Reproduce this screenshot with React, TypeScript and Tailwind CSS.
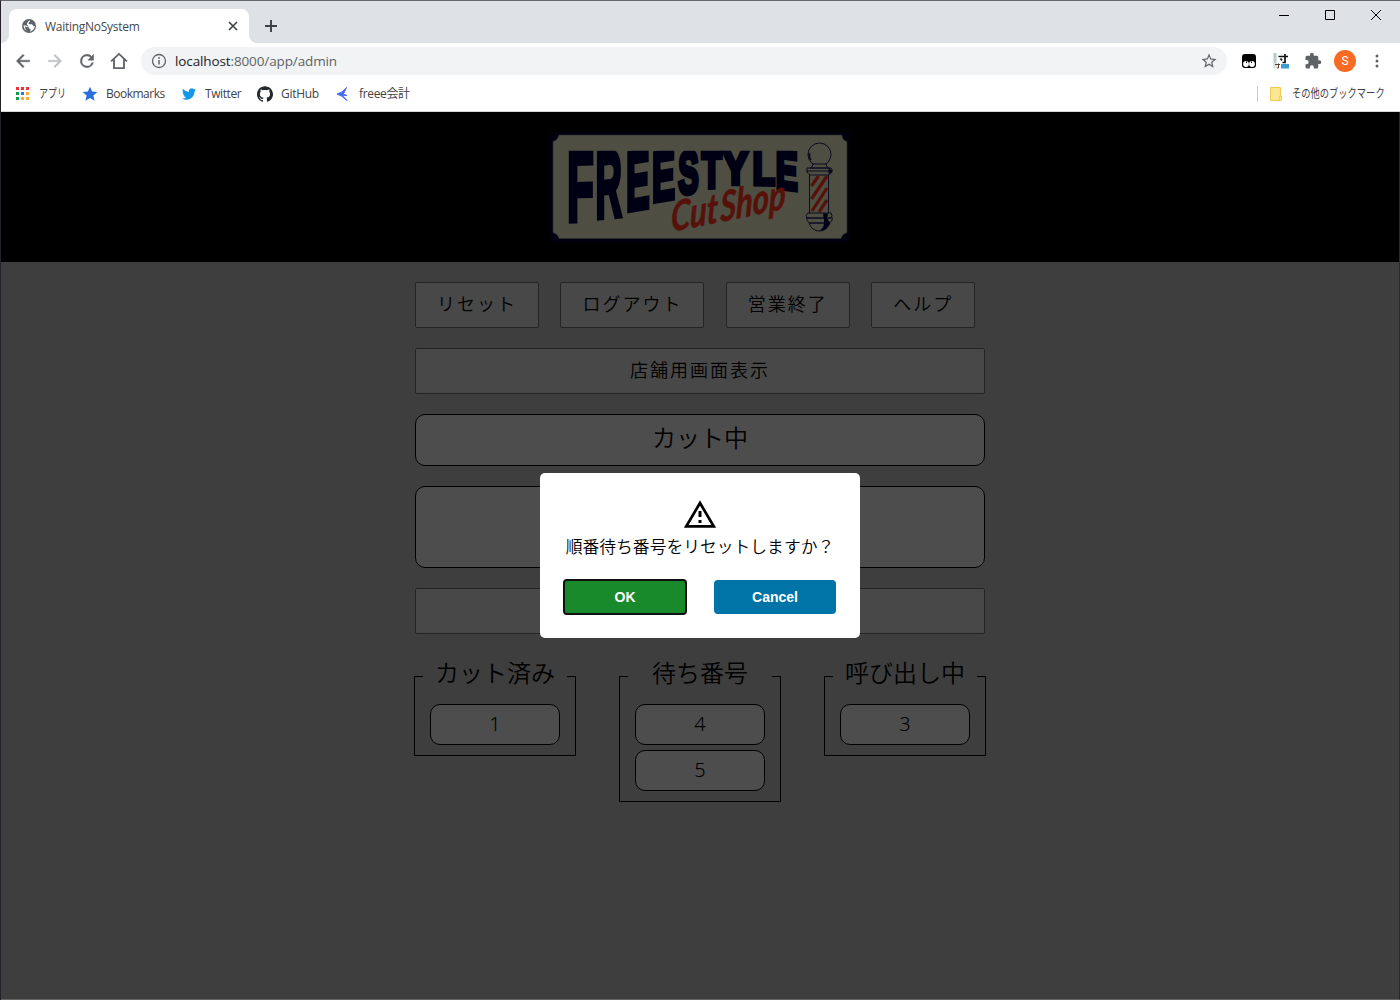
import type { ReactNode } from "react";

const JP = "font-['Noto_Sans_CJK_JP',sans-serif]";

const LETTERS: { c: string; x: number; w: number; bottomL: number; bottomR: number }[] = [
  { c: "F", x: 28, w: 26.5, bottomL: 103.5, bottomR: 102 },
  { c: "R", x: 56, w: 27.5, bottomL: 101.5, bottomR: 96.5 },
  { c: "E", x: 86.5, w: 24, bottomL: 95, bottomR: 87 },
  { c: "E", x: 112.5, w: 23.5, bottomL: 86, bottomR: 78 },
  { c: "S", x: 137.5, w: 22, bottomL: 77, bottomR: 73 },
  { c: "T", x: 160.5, w: 22.5, bottomL: 70, bottomR: 69 },
  { c: "Y", x: 181.5, w: 28, bottomL: 66, bottomR: 66 },
  { c: "L", x: 213, w: 22.5, bottomL: 66, bottomR: 67 },
  { c: "E", x: 236, w: 22.5, bottomL: 68, bottomR: 74 },
];

/* Glyph ink metrics of Liberation Sans Bold at 100px: left bearing and ink width. */
const INK: Record<string, [number, number]> = {
  F: [6.9, 51.2],
  R: [6.9, 64.2],
  E: [6.9, 56.3],
  S: [3.9, 58.7],
  T: [2.1, 56.9],
  Y: [1.5, 63.7],
  L: [6.9, 50.3],
};

function Logo() {
  return (
    <svg viewBox="0 0 320 130" className="h-[130px] w-[320px]">
      <clipPath id="wordmark">
        <rect x="0" y="30.700" width="320" height="90" />
      </clipPath>
      <rect x="10" y="12.500" width="300" height="109.500" fill="#00000f" />
      <path
        d="M19 15H302Q302 20 307 21.500V112.500Q302 114 301 118.500H19Q18 114 13 112.500V21.500Q18 20 19 15Z"
        fill="#4e4e43"
        stroke="#2e2e34"
        strokeWidth="0.6"
      />
      <g clipPath="url(#wordmark)">
        {LETTERS.map((l, i) => {
          const [lb, iw] = INK[l.c];
          const sx = (l.w - 4) / iw;
          const mid = (l.bottomL + l.bottomR) / 2;
          const half = (l.bottomR - l.bottomL) / 2;
          const skew = half / l.w;
          const sy = (mid - 2 - 32) / 68.8;
          const x0 = l.x + 2 - lb * sx;
          return (
            <text
              key={i}
              fontFamily="Liberation Sans"
              fontWeight="bold"
              fontSize="100"
              fill="#000014"
              stroke="#000014"
              strokeWidth="4"
              vectorEffect="non-scaling-stroke"
              transform={`matrix(${sx} ${skew * sx} 0 ${sy} ${x0} ${mid - 2 - half / 2})`}
            >
              {l.c}
            </text>
          );
        })}
      </g>
      <text
        fontFamily="Lato"
        fontStyle="italic"
        fontWeight="bold"
        fontSize="41"
        fill="#56120a"
        stroke="#56120a"
        strokeWidth="0.6"
        strokeLinejoin="round"
        wordSpacing="-6"
        textLength="117"
        lengthAdjust="spacingAndGlyphs"
        transform="translate(131 112) rotate(-11.500) skewX(-12)"
      >
        Cut Shop
      </text>
      <g stroke="#0c0c20" strokeWidth="1" fill="none">
        <circle cx="279.500" cy="34.500" r="11.500" />
        <path d="M269.500 33q-1 4 1.500 7" strokeWidth="1.800" />
        <path d="M273 44h13q0 3 3 4h-19q3-1 3-4zM267 48h24q2 2 1 4-1 2-4 3h-17q-3-1-4-3zM266.500 51h25M269.500 55v38M288.500 55v38" fill="#4e4e43" />
        <path d="M289 48.500l3 2.500-3 2.500z" fill="#000014" />
        <path d="M271.500 66l7-10M271.500 79l15.500-23M272 91l15-23M279 92l8-12" stroke="#56120a" strokeWidth="3.200" />
        <path d="M268 93h23q2 3 0 5h-24q-2-3 1-5zM266.500 98h26q0 3-3 5h-20q-3-2-3-5zM269 103q3 8 10.500 8t10.500-8z" fill="#4e4e43" />
        <path d="M283 93.500h5l-1 5 3 4q-3 8-10 8 5-4 4-10z" fill="#000014" stroke="none" />
      </g>
    </svg>
  );
}

function ShopButton({ children, className }: { children?: ReactNode; className: string }) {
  return (
    <button
      className={`flex h-[46px] shrink-0 items-center justify-center rounded-[2px] border border-[#242424] bg-[#484848] pb-[3px] text-[18px] font-[350] tracking-[2px] whitespace-nowrap text-black ${className}`}
    >
      {children}
    </button>
  );
}

function Group({ title, items }: { title: string; items: number[] }) {
  return (
    <section className="w-[162px]">
      <div className="flex h-[30px] items-center">
        <span className="h-[14px] w-[9px] shrink-0 self-end border-t border-l border-black" />
        <h2 className="flex-1 pb-[6px] text-center text-[24px] leading-[24px] font-[350] whitespace-nowrap">{title}</h2>
        <span className="h-[14px] w-[9px] shrink-0 self-end border-t border-r border-black" />
      </div>
      <div className="flex flex-col gap-[5px] border-x border-b border-black px-[15px] pt-[14px] pb-[10px]">
        {items.map((n) => (
          <div
            key={n}
            className="flex h-[41px] items-center justify-center rounded-[10px] border border-black bg-[#4d4d4d] pb-[2px] font-['Noto_Sans',sans-serif] text-[20px] font-light"
          >
            {n}
          </div>
        ))}
      </div>
    </section>
  );
}

function TabStrip() {
  return (
    <div className="flex h-[42px] items-end bg-[#dee1e6]">
      <div className="flex h-[34px] w-2 items-end bg-white">
        <div className="h-full w-full rounded-br-[8px] bg-[#dee1e6]" />
      </div>
      <div className="flex h-[34px] w-[240px] items-center rounded-t-[8px] bg-white pl-[13px]">
        <svg viewBox="0 0 16 16" className="size-[14px]">
          <circle cx="8" cy="8" r="8" fill="#5f6368" />
          <path d="M9 1.500Q9.500 3.500 7.500 4.200 7 6 9 6h2.500l1.500 2h1.600Q14.500 13 9 14.500 10.500 12.500 9.500 11.500 7.500 11 7.500 9L4.500 7.500H1.500Q2 11.500 5.500 13.800 2.500 9 3.500 8.500L6 9.500 7 8 5.500 6 6.500 3.500z" fill="white" />
        </svg>
        <span className="mt-[2px] ml-[9px] text-[12px] tracking-[-0.270px] text-[#45484d]">WaitingNoSystem</span>
        <svg viewBox="0 0 10 10" className="mr-[11px] ml-auto size-[10px]">
          <path d="M1 1l8 8M9 1l-8 8" stroke="#3c4043" strokeWidth="1.600" />
        </svg>
      </div>
      <div className="flex h-[34px] w-2 items-end bg-white">
        <div className="h-full w-full rounded-bl-[8px] bg-[#dee1e6]" />
      </div>
      <svg viewBox="0 0 12 12" className="mb-[11px] ml-[8px] size-[12px]">
        <path d="M6 0v12M0 6h12" stroke="#3c4043" strokeWidth="1.900" />
      </svg>
      <div className="mb-[22px] ml-auto flex items-center pr-[18px]">
        <svg viewBox="0 0 12 12" className="size-[12px]">
          <path d="M1 6.500h10" stroke="black" />
        </svg>
        <svg viewBox="0 0 12 12" className="ml-[34px] size-[12px]">
          <path d="M1.500 1.500h9v9h-9z" stroke="black" fill="none" />
        </svg>
        <svg viewBox="0 0 12 12" className="ml-[34px] size-[12px]">
          <path d="M1 1l10 10M11 1L1 11" stroke="black" />
        </svg>
      </div>
    </div>
  );
}

function Toolbar() {
  return (
    <div className="flex h-[36px] items-center">
      <svg viewBox="0 0 24 24" className="ml-[12px] size-5" fill="#5f6368" stroke="#5f6368" strokeWidth="0.500">
        <path d="M20 11H7.830l5.590-5.590L12 4l-8 8 8 8 1.410-1.410L7.830 13H20z" />
      </svg>
      <svg viewBox="0 0 24 24" className="ml-[12px] size-5" fill="#bdc1c6" stroke="#bdc1c6" strokeWidth="0.500">
        <path d="M12 4l-1.410 1.410L16.170 11H4v2h12.170l-5.580 5.590L12 20l8-8z" />
      </svg>
      <svg viewBox="0 0 24 24" className="ml-[12px] size-5" fill="#5f6368" stroke="#5f6368" strokeWidth="0.500">
        <path d="M17.650 6.350A7.958 7.958 0 0 0 12 4a8 8 0 1 0 7.730 10h-2.080A6 6 0 1 1 12 6c1.660 0 3.140.69 4.220 1.780L13 11h7V4z" />
      </svg>
      <svg viewBox="0 0 24 24" className="ml-[12px] size-5" fill="none" stroke="#5f6368" strokeWidth="2.200">
        <path d="M2.500 12.500L12 3.500l9.500 9M6 10v10.500h12V10" />
      </svg>
      <div className="ml-[12px] flex h-[28px] w-[1086px] items-center rounded-full bg-[#f1f3f4]">
        <svg viewBox="0 0 16 16" className="ml-[10px] size-4" fill="none" stroke="#5f6368">
          <circle cx="8" cy="8" r="6.500" strokeWidth="1.300" />
          <path d="M8 4v1.700M8 7v4.500" strokeWidth="1.500" />
        </svg>
        <span className="ml-[8px] text-[13.500px] tracking-[-0.120px] text-[#5f6368]">
          <span className="text-[#202124]">localhost</span>:8000/app/admin
        </span>
        <svg viewBox="0 0 24 24" className="mr-[9px] ml-auto size-[18px]" fill="#5f6368">
          <path d="M22 9.240l-7.190-.62L12 2 9.190 8.630 2 9.240l5.460 4.730L5.820 21 12 17.270 18.180 21l-1.630-7.030zM12 15.400l-3.760 2.270 1-4.280-3.320-2.880 4.380-.38L12 6.100l1.710 4.040 4.380.38-3.320 2.880 1 4.280z" />
        </svg>
      </div>
      <svg viewBox="0 0 14 14" className="ml-[15px] size-[14px]">
        <rect width="14" height="14" rx="3" fill="black" />
        <circle cx="4" cy="10" r="2.900" fill="white" />
        <circle cx="10" cy="10" r="2.900" fill="white" />
        <path d="M4 7.500h1v1.500h-1zM9 7.500h1v1.500h-1z" fill="black" />
      </svg>
      <svg viewBox="0 0 16 16" className="ml-[17px] size-4" fill="none">
        <path d="M0 0h4v15H0z" fill="#d9e2e4" />
        <path d="M2 0v10" stroke="#9fb0b6" />
        <path d="M5.500 3.500h9.500M12 1v8.500h-2.500M7.500 5.500l1.500 2" stroke="#111" strokeWidth="1.700" />
        <path d="M8 11h8v4.500H8z" fill="#3f9bd6" />
        <path d="M2 11.500h5M5.500 10.500v4.500h-1.500" stroke="#5a4028" />
      </svg>
      <svg viewBox="0 0 24 24" className="ml-[15px] size-[18px]" fill="#5f6368">
        <path d="M20.500 11H19V7a2 2 0 0 0-2-2h-4V3.500a2.500 2.500 0 0 0-5 0V5H4a2 2 0 0 0-2 2v3.800h1.500a2.700 2.700 0 0 1 0 5.400H2V20a2 2 0 0 0 2 2h3.800v-1.500a2.700 2.700 0 0 1 5.400 0V22H17a2 2 0 0 0 2-2v-4h1.500a2.500 2.500 0 0 0 0-5z" />
      </svg>
      <div className="ml-[12px] flex size-[22px] items-center justify-center rounded-full bg-[#fb6a22] font-['Roboto',sans-serif] text-[12px] text-white">
        S
      </div>
      <svg viewBox="0 0 4 14" className="ml-[19px] h-[14px] w-[4px]" fill="#5f6368">
        <circle cx="2" cy="2" r="1.500" />
        <circle cx="2" cy="7" r="1.500" />
        <circle cx="2" cy="12" r="1.500" />
      </svg>
    </div>
  );
}

const APP_DOTS = ["#f2303c", "#f2303c", "#f2303c", "#0f9d58", "#2979e8", "#f9ab2b", "#0f9d58", "#f9ab2b", "#f9ab2b"];

function BookmarkBar() {
  return (
    <div className="flex h-[32px] items-center pb-[3px] text-[12px] text-[#3f4246]">
      <svg viewBox="0 0 13 13" className="ml-[15px] size-[13px]">
        {APP_DOTS.map((c, i) => (
          <rect key={i} x={(i % 3) * 5} y={Math.floor(i / 3) * 5} width="3" height="3" fill={c} />
        ))}
      </svg>
      <span className="ml-[10px] w-[27px] whitespace-nowrap">
        <span className="inline-block origin-left scale-x-75">アプリ</span>
      </span>
      <svg viewBox="0 0 24 24" className="ml-[16px] size-4" fill="#2a6fdf">
        <path d="M12 1l3.200 7.300 7.800.7-5.900 5.200L18.800 22 12 17.900 5.200 22l1.700-7.800L1 9l7.800-.7z" />
      </svg>
      <span className="ml-[8px] w-[59px] tracking-[-0.500px] whitespace-nowrap">Bookmarks</span>
      <svg viewBox="0 0 24 24" className="ml-[16px] size-4 p-px" fill="#1196ea">
        <path d="M23.953 4.570a10 10 0 0 1-2.825.775 4.958 4.958 0 0 0 2.163-2.723c-.951.555-2.005.959-3.127 1.184a4.920 4.920 0 0 0-8.384 4.482C7.690 8.095 4.067 6.130 1.640 3.162a4.822 4.822 0 0 0-.666 2.475c0 1.710.87 3.213 2.188 4.096a4.904 4.904 0 0 1-2.228-.616v.06a4.923 4.923 0 0 0 3.946 4.827 4.996 4.996 0 0 1-2.212.085 4.936 4.936 0 0 0 4.604 3.417 9.867 9.867 0 0 1-6.102 2.105c-.39 0-.779-.023-1.170-.067a13.995 13.995 0 0 0 7.557 2.209c9.053 0 13.998-7.496 13.998-13.985 0-.21 0-.42-.015-.63A9.935 9.935 0 0 0 24 4.590z" />
      </svg>
      <span className="ml-[8px] w-[36px] tracking-[-0.400px] whitespace-nowrap">Twitter</span>
      <svg viewBox="0 0 24 24" className="ml-[16px] size-4" fill="#24292e">
        <path d="M12 .297c-6.630 0-12 5.373-12 12 0 5.303 3.438 9.800 8.205 11.385.6.113.82-.258.82-.577 0-.285-.01-1.040-.015-2.040-3.338.724-4.042-1.610-4.042-1.610C4.422 18.070 3.633 17.700 3.633 17.700c-1.087-.744.084-.729.084-.729 1.205.084 1.838 1.236 1.838 1.236 1.070 1.835 2.809 1.305 3.495.998.108-.776.417-1.305.76-1.605-2.665-.3-5.466-1.332-5.466-5.930 0-1.310.465-2.380 1.235-3.220-.135-.303-.54-1.523.105-3.176 0 0 1.005-.322 3.300 1.230.96-.267 1.980-.399 3-.405 1.020.006 2.040.138 3 .405 2.280-1.552 3.285-1.230 3.285-1.230.645 1.653.24 2.873.12 3.176.765.84 1.230 1.910 1.230 3.220 0 4.610-2.805 5.625-5.475 5.920.42.36.81 1.096.81 2.220 0 1.606-.015 2.896-.015 3.286 0 .315.21.69.825.57C20.565 22.092 24 17.592 24 12.297c0-6.627-5.373-12-12-12" />
      </svg>
      <span className="ml-[8px] w-[38px] tracking-[-0.300px] whitespace-nowrap">GitHub</span>
      <svg viewBox="0 0 16 16" className="ml-[16px] size-4">
        <path d="M2 8l5-2 4.500-4.500L9 7l-1 1 4 1.500-4-.3.500 1.500L12 14.500 6.500 10z" fill="#4a6cf0" stroke="#4a6cf0" strokeWidth="1" />
      </svg>
      <span className="ml-[8px] w-[52px] tracking-[-0.350px] whitespace-nowrap">freee会計</span>
      <span className="ml-auto h-4 w-px bg-[#c9ccd1]" />
      <svg viewBox="0 0 12 14" className="ml-[12px] h-[14px] w-[12px]">
        <path d="M.5.500h10v13H.5z" fill="#ffe693" stroke="#f0cb58" />
        <path d="M9.500 13.500v-4h2v4z" fill="#ffe693" stroke="#f0cb58" />
      </svg>
      <span className="ml-[10px] w-[108px] whitespace-nowrap">
        <span className="inline-block origin-left scale-x-[0.772]">その他のブックマーク</span>
      </span>
    </div>
  );
}

function ConfirmDialog() {
  return (
    <div className="absolute top-[473px] left-[540px] flex h-[165px] w-[320px] flex-col items-center rounded-[5px] bg-white">
      <svg viewBox="0 0 32 28" className="mt-[27px] h-[28px] w-[32px]">
        <path d="M16 3L29.700 26.300H2.300z" fill="none" stroke="black" strokeWidth="2.700" />
        <path d="M14.500 11h3v6h-3zM14.500 20h3v3h-3z" fill="black" />
      </svg>
      <p className="mt-[6px] font-['Noto_Sans_CJK_JP',sans-serif] text-[16.800px] leading-[24px] font-[350] whitespace-nowrap text-black">
        順番待ち番号をリセットしますか？
      </p>
      <div className="mt-[21px] mr-px flex items-center gap-[27px] font-['Liberation_Sans',sans-serif] text-[14px] font-bold text-white">
        <button className="h-[36px] w-[124px] rounded-[4px] border-2 border-[#101010] bg-[#198a2b]">OK</button>
        <button className="h-[34px] w-[122px] rounded-[4px] bg-[#0074a6]">Cancel</button>
      </div>
    </div>
  );
}

export default function App() {
  return (
    <div className="relative flex h-[1000px] w-[1400px] flex-col overflow-hidden border-t border-l border-t-[#66686b] border-l-[#242128] bg-white">
      <div className="font-['Open_Sans','Noto_Sans_CJK_JP',sans-serif]">
        <TabStrip />
        <Toolbar />
        <BookmarkBar />
        <div className="h-px bg-[#d5d5d5]" />
      </div>
      <main className={`flex flex-1 flex-col items-center border-r border-b border-r-[#2a2a2a] border-b-[#686461] bg-[#3e3e3e] text-black ${JP}`}>
        <header className="flex h-[150px] w-full justify-center bg-black pt-[8px] pr-px">
          <Logo />
        </header>
        <div className="flex w-[570px] flex-col gap-5 pt-5">
          <div className="flex gap-[21.400px]">
            <ShopButton className="w-[124px]">リセット</ShopButton>
            <ShopButton className="w-[144px]">ログアウト</ShopButton>
            <ShopButton className="w-[124px]">営業終了</ShopButton>
            <ShopButton className="w-[104px]">ヘルプ</ShopButton>
          </div>
          <ShopButton className="w-full">店舗用画面表示</ShopButton>
          <div className="flex h-[52px] items-center justify-center rounded-[10px] border border-black bg-[#4d4d4d] pb-[7px] text-[24px] font-[350]">
            カット中
          </div>
          <div className="h-[82px] rounded-[10px] border border-black bg-[#4d4d4d]" />
          <ShopButton className="w-full" />
        </div>
        <div className="mt-[26px] flex w-[572px] items-start justify-between">
          <Group title="カット済み" items={[1]} />
          <Group title="待ち番号" items={[4, 5]} />
          <Group title="呼び出し中" items={[3]} />
        </div>
      </main>
      <div className="absolute inset-0 -m-px">
        <ConfirmDialog />
      </div>
    </div>
  );
}
